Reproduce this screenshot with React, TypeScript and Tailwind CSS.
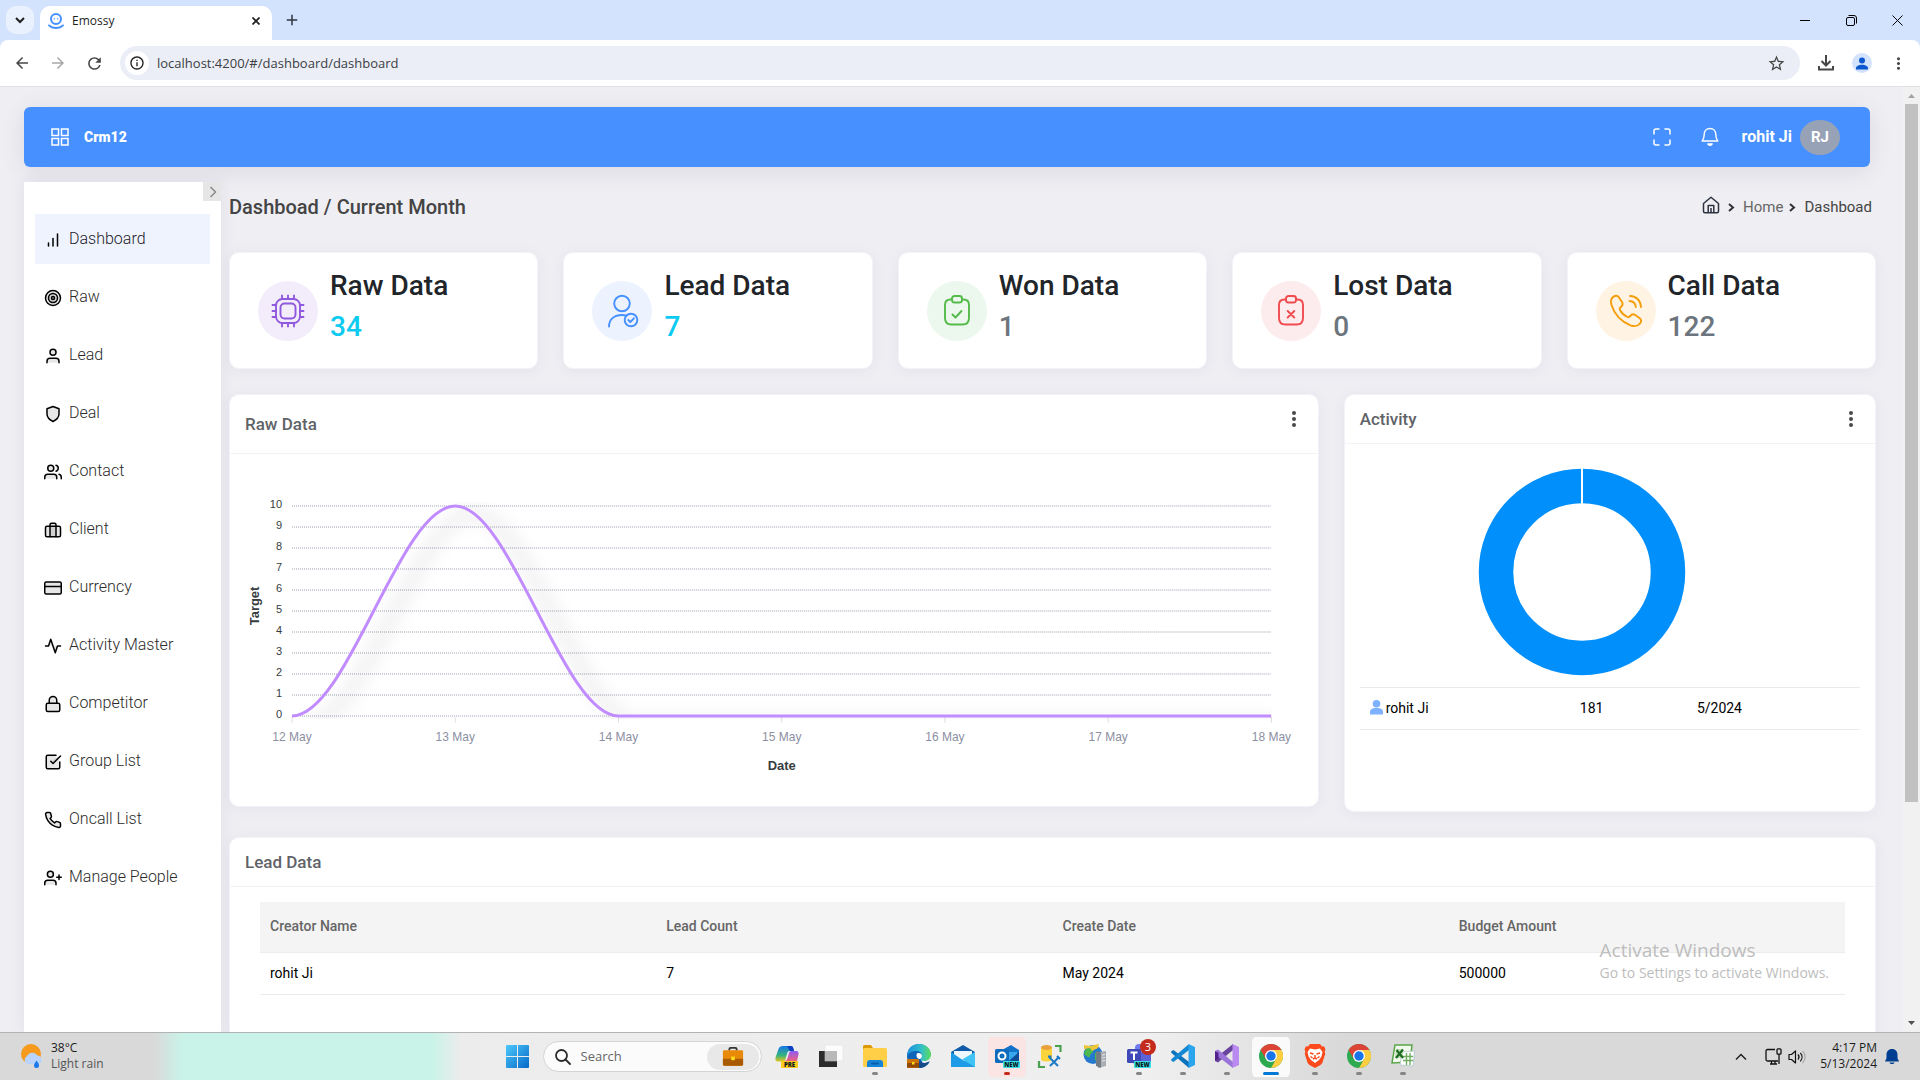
import type { ReactNode } from "react";
import {
  FiActivity, FiBarChart, FiBriefcase, FiCheckSquare, FiCreditCard, FiLock,
  FiPhone, FiShield, FiTarget, FiUser, FiUserPlus, FiUsers,
} from "react-icons/fi";
import {
  MdArrowBack, MdArrowForward, MdMoreVert,
  MdOutlineInfo, MdRefresh, MdStarOutline, MdAdd,
} from "react-icons/md";

const UI = "font-['Open_Sans',sans-serif]";

/* ---------- Browser chrome ---------- */

function TabStrip() {
  return (
    <div className={`flex h-10 shrink-0 items-end bg-[#d3e2fd] ${UI}`}>
      <button aria-label="Search tabs" className="mb-1.5 ml-1.5 flex size-7 items-center justify-center rounded-[10px] bg-[#e9f1fe]">
        <svg width="10" height="7" viewBox="0 0 10 7" fill="none" stroke="#1f1f1f" strokeWidth="2"><path d="M1 1l4 4 4-4" /></svg>
      </button>
      <div className="ml-1.5 flex h-[34px] w-[232px] items-center rounded-t-[10px] bg-white px-2 pb-1">
        <svg width="16" height="16" viewBox="0 0 16 16" fill="none" stroke="#4690ff">
          <circle cx="8" cy="6" r="5" strokeWidth="2" />
          <circle cx="6.300" cy="5.800" r=".7" fill="#4690ff" stroke="none" />
          <circle cx="9.700" cy="5.800" r=".7" fill="#4690ff" stroke="none" />
          <path d="M1 12.300c3.500 3.600 10.500 3.600 14 0" strokeWidth="1.800" strokeLinecap="round" />
        </svg>
        <span className="ml-2 flex-1 text-xs text-[#1f1f1f]">Emossy</span>
        <button aria-label="Close tab" className="flex size-4 items-center justify-center">
          <svg width="8" height="8" viewBox="0 0 8 8" stroke="#1f1f1f" strokeWidth="1.700"><path d="M.5.5l7 7M7.500.5l-7 7" /></svg>
        </button>
      </div>
      <button aria-label="New tab" className="mb-[11px] ml-[11px] text-[#303540]">
        <MdAdd size={18} />
      </button>
      <div className="ml-auto flex h-10 items-center">
        <button aria-label="Minimize" className="flex w-[46px] justify-center">
          <svg width="10" height="10" viewBox="0 0 10 10" stroke="#000"><path d="M0 5.500h10" /></svg>
        </button>
        <button aria-label="Restore" className="flex w-[46px] justify-center">
          <svg width="11" height="11" viewBox="0 0 11 11" fill="none" stroke="#000">
            <rect x=".5" y="2.500" width="8" height="8" rx="1.500" />
            <path d="M2.500.5h5.500a2.500 2.500 0 0 1 2.500 2.500v5.500" />
          </svg>
        </button>
        <button aria-label="Close" className="flex w-[46px] justify-center">
          <svg width="11" height="11" viewBox="0 0 11 11" stroke="#000"><path d="M.5.5l10 10M10.500.5l-10 10" /></svg>
        </button>
      </div>
    </div>
  );
}

function Toolbar() {
  return (
    <div className="bg-[#d3e2fd]">
      <div className={`flex h-[47px] shrink-0 items-center rounded-t-[8px] border-b border-[#dfe1e5] bg-white text-[#474747] ${UI}`}>
        <button aria-label="Back" className="ml-1 flex size-9 items-center justify-center"><MdArrowBack size={18} /></button>
        <button aria-label="Forward" className="flex size-9 items-center justify-center text-[#a8a8a8]"><MdArrowForward size={18} /></button>
        <button aria-label="Reload" className="flex size-9 items-center justify-center"><MdRefresh size={19} /></button>
        <div className="ml-2 flex h-[34px] flex-1 items-center rounded-full bg-[#ebeef7] pl-[5px] pr-3.5">
          <button aria-label="Site information" className="flex size-6 items-center justify-center rounded-full bg-white text-[#1f1f1f]"><MdOutlineInfo size={16} /></button>
          <input aria-label="Address" className="ml-2 flex-1 bg-transparent pt-0.5 text-[13px] text-[#3c4043] outline-none" defaultValue="localhost:4200/#/dashboard/dashboard" />
          <button aria-label="Bookmark this tab"><MdStarOutline size={19} /></button>
        </div>
        <button aria-label="Downloads" className="ml-[17px]">
          <svg width="18" height="18" viewBox="0 0 18 18" fill="none" stroke="#474747" strokeWidth="2">
            <path d="M9 1v10M4.500 7L9 11.500 13.500 7M2 12v3.500h14V12" />
          </svg>
        </button>
        <button aria-label="Profile" className="ml-[17px] flex size-5 items-center justify-center rounded-full bg-[#d3e2fd]">
          <svg width="12" height="13" viewBox="0 0 12 13" fill="#0b57d0"><circle cx="6" cy="3.500" r="3" /><path d="M0 12.500v-1.500c0-2 3-3.300 6-3.300s6 1.300 6 3.300v1.500z" /></svg>
        </button>
        <button aria-label="Menu" className="ml-[17px] mr-3"><MdMoreVert size={19} /></button>
      </div>
    </div>
  );
}

/* ---------- Application ---------- */

function AppHeader() {
  return (
    <header className="mr-[33px] flex h-[60px] items-center rounded-md bg-[#4690ff] pl-[27px] pr-[30px] text-white shadow-[0_4px_24px_rgba(20,20,40,0.09)]">
      <button aria-label="Toggle menu">
        <svg width="18" height="18" viewBox="0 0 18 18" fill="none" stroke="currentColor" strokeWidth="1.500">
          <rect x="1" y="1" width="6.500" height="6.500" /><rect x="10.500" y="1" width="6.500" height="6.500" />
          <rect x="1" y="10.500" width="6.500" height="6.500" /><rect x="10.500" y="10.500" width="6.500" height="6.500" />
        </svg>
      </button>
      <span className="ml-[15px] text-sm font-black">Crm12</span>
      <button aria-label="Full screen" className="ml-auto">
        <svg width="18" height="18" viewBox="0 0 18 18" fill="none" stroke="currentColor" strokeWidth="1.500" strokeLinecap="round">
          <path d="M1 6V3a2 2 0 0 1 2-2h3M12 1h3a2 2 0 0 1 2 2v3M17 12v3a2 2 0 0 1-2 2h-3M6 17H3a2 2 0 0 1-2-2v-3" />
        </svg>
      </button>
      <button aria-label="Notifications" className="ml-[29px]">
        <svg width="20" height="20" viewBox="0 0 20 20" fill="none" stroke="currentColor" strokeWidth="1.400" strokeLinejoin="round">
          <path d="M10 1.500c3.600 0 5.800 2.600 5.800 6 0 3.500.5 4.800 2 6.500H2.200c1.500-1.700 2-3 2-6.500 0-3.400 2.200-6 5.800-6z" />
          <path d="M7.800 17c.8 1.600 3.600 1.600 4.400 0z" fill="currentColor" />
        </svg>
      </button>
      <span className="ml-[22px] text-base font-bold">rohit Ji</span>
      <span className="ml-2 flex h-[35px] w-10 items-center justify-center rounded-[50%] bg-[#98a2b7] text-[15px] font-bold">RJ</span>
    </header>
  );
}

const NAV = [
  { label: "Dashboard", Icon: FiBarChart },
  { label: "Raw", Icon: FiTarget },
  { label: "Lead", Icon: FiUser },
  { label: "Deal", Icon: FiShield },
  { label: "Contact", Icon: FiUsers },
  { label: "Client", Icon: FiBriefcase },
  { label: "Currency", Icon: FiCreditCard },
  { label: "Activity Master", Icon: FiActivity },
  { label: "Competitor", Icon: FiLock },
  { label: "Group List", Icon: FiCheckSquare },
  { label: "Oncall List", Icon: FiPhone },
  { label: "Manage People", Icon: FiUserPlus },
];

function Sidebar() {
  return (
    <aside className="w-[197px] shrink-0 bg-white shadow-[0_0_16px_rgba(40,40,90,0.07)]">
      <button aria-label="Collapse sidebar" className="ml-auto flex h-[19px] w-[18px] items-center justify-center bg-[#e6e6e6] pl-0.5">
        <svg width="8" height="12" viewBox="0 0 8 12" fill="none" stroke="#8a8a8a" strokeWidth="1.500"><path d="M1.500 1l5 5-5 5" /></svg>
      </button>
      <nav className="ml-[11px] mr-[11px] mt-[13px] flex flex-col gap-2">
        {NAV.map(({ label, Icon }, i) => (
          <a
            key={label}
            href="#"
            className={
              i === 0
                ? "flex h-[50px] items-center gap-[7px] bg-[#eff3fd] pl-[9px] text-base font-light text-[#1c2029]"
                : "flex h-[50px] items-center gap-[7px] pl-[9px] text-base font-light text-[#2b2b2b]"
            }
          >
            <Icon size={18} className="mt-0.5 fill-[#00000018] text-black" />
            {label}
          </a>
        ))}
      </nav>
    </aside>
  );
}

function PageTitle() {
  return (
    <div className="mb-5 flex h-[50px] items-center justify-between pr-1">
      <h1 className="text-xl font-medium text-[#444]">Dashboad / Current Month</h1>
      <nav aria-label="Breadcrumb" className="flex items-center text-[15px] text-[#444]">
        <a href="#" aria-label="Home page" className="mb-1">
          <svg width="18" height="18" viewBox="0 0 18 18" fill="none" stroke="#2c323f" strokeWidth="1.500" strokeLinejoin="round">
            <path d="M1.500 7.500L9 1.200l7.500 6.300v7.700a1.500 1.500 0 0 1-1.500 1.500H3a1.500 1.500 0 0 1-1.500-1.500z" />
            <path d="M6.200 16.500V9.500h5.600v7M9 12v4.500" />
          </svg>
        </a>
        <Chevron className="ml-2" />
        <a href="#" className="ml-2 text-[#666]">Home</a>
        <Chevron className="ml-1.5" />
        <span className="ml-2">Dashboad</span>
      </nav>
    </div>
  );
}

function Chevron({ className }: { className: string }) {
  return (
    <svg className={className} width="7" height="9" viewBox="0 0 7 9" fill="none" stroke="#333" strokeWidth="2"><path d="M1 1l4 3.500L1 8" /></svg>
  );
}

const CARD = "rounded-[10px] border border-[#f3f3fa] bg-white shadow-[0_2px_14px_rgba(60,60,110,0.06)]";

const clipboard = (
  <>
    <path d="M11 4.500H9.500C6 4.500 4 6.500 4 10v13c0 4.500 2 6.500 6.500 6.500h11c4.500 0 6.500-2 6.500-6.500V10c0-3.500-2-5.500-5.500-5.500H21" />
    <rect x="11" y="1" width="10" height="6.500" rx="2.500" />
  </>
);

const STATS: { title: string; value: string; circle: string; num: string; icon: ReactNode }[] = [
  {
    title: "Raw Data", value: "34", circle: "bg-[#f3edfb] text-[#9059dd]", num: "text-[#0dcaf0]",
    icon: (
      <>
        <rect x="4" y="4" width="24" height="24" rx="6.500" />
        <rect x="8.500" y="8.500" width="15" height="15" rx="4" />
        <path d="M10 4V.5M16 4V.5M22 4V.5M10 31.500V28M16 31.500V28M22 31.500V28M4 10H.5M4 16H.5M4 22H.5M31.500 10H28M31.500 16H28M31.500 22H28" />
      </>
    ),
  },
  {
    title: "Lead Data", value: "7", circle: "bg-[#ecf3ff] text-[#4690ff]", num: "text-[#0dcaf0]",
    icon: (
      <>
        <circle cx="16" cy="8.500" r="7.800" />
        <path d="M3 31.500c0-7 5-11.500 13-11.500 1.500 0 3 .2 4.500.6" />
        <circle cx="25" cy="25" r="6.300" />
        <path d="M22.300 25l2 2 3.600-3.700" />
      </>
    ),
  },
  {
    title: "Won Data", value: "1", circle: "bg-[#ecf8ed] text-[#54ba4a]", num: "text-[#6c757d]",
    icon: <>{clipboard}<path d="M11.500 19.500l3 3 6-6.500" /></>,
  },
  {
    title: "Lost Data", value: "0", circle: "bg-[#fdeced] text-[#f04b4f]", num: "text-[#6c757d]",
    icon: <>{clipboard}<path d="M12.700 16l6.600 6.500M19.300 16l-6.600 6.500" /></>,
  },
  {
    title: "Call Data", value: "122", circle: "bg-[#fff4e3] text-[#f59e0b]", num: "text-[#6c757d]",
    icon: (
      <>
        <path d="M2.500 2.500C5 0 7.500.2 9 2.500l3 4.500c1 1.500.8 3-.5 4.300l-1.200 1.200c-.8.800-.8 1.600-.3 2.500 1.500 3 4 5.500 7.500 7 .9.400 1.500.2 2.200-.5l1.300-1.200c1.300-1.200 2.700-1.300 4.200-.3l4.300 3c2 1.500 2.100 3.500.5 5.500-2.200 2.800-5 3.500-9.500 1.800C10 26 4.500 19.500 1.500 10c-.9-3-.8-5.500 1-7.500z" />
        <path d="M20 1c6.500.3 10.700 4.700 11 11M19.500 6c4 .3 6 2.300 6.300 6" />
      </>
    ),
  },
];

function StatCards() {
  return (
    <div className="grid grid-cols-5 gap-[25px]">
      {STATS.map((s) => (
        <section key={s.title} className={`flex h-[117px] items-start pl-7 ${CARD}`}>
          <span className={`mt-7 flex size-[60px] shrink-0 items-center justify-center rounded-full ${s.circle}`}>
            <svg width="32" height="32" viewBox="0 0 32 32" fill="none" stroke="currentColor" strokeWidth="1.900" strokeLinecap="round" strokeLinejoin="round" className="overflow-visible">{s.icon}</svg>
          </span>
          <div className="ml-3 mt-3 text-[28px] font-medium leading-[41px]">
            <h2 className="text-[#212529]">{s.title}</h2>
            <p className={s.num}>{s.value}</p>
          </div>
        </section>
      ))}
    </div>
  );
}

function Dots() {
  return (
    <button aria-label="More options">
      <svg width="6" height="18" viewBox="0 0 6 18" fill="#4a4a4a"><circle cx="3" cy="3" r="2" /><circle cx="3" cy="9" r="2" /><circle cx="3" cy="15" r="2" /></svg>
    </button>
  );
}

const DAYS = ["12 May", "13 May", "14 May", "15 May", "16 May", "17 May", "18 May"];

function LineChart() {
  const x0 = 62, step = 163.3, top = 52, unit = 21;
  const base = top + unit * 10;
  const x = (i: number) => x0 + i * step;
  const c = step * 0.34;
  return (
    <svg className="block w-full" viewBox="0 0 1088 352" role="img" aria-label="Raw data per day" fontFamily="'Liberation Sans', Arial, sans-serif">
      <defs>
        <filter id="lineShadow" x="-20%" y="-20%" width="140%" height="140%">
          <feDropShadow dx="18" dy="7" stdDeviation="9" floodColor="#000" floodOpacity="0.27" />
        </filter>
        <clipPath id="plot"><rect x={x0} y={top - 4} width={step * 6} height={unit * 10 + 7} /></clipPath>
      </defs>
      {Array.from({ length: 11 }, (_, i) => (
        <g key={i}>
          <path d={`M${x0} ${top + i * unit}h${step * 6}`} stroke="#cdd0d8" strokeWidth="2" strokeDasharray="1 1" />
          <text x={x0 - 10} y={top + i * unit + 2} textAnchor="end" fontSize="11" fill="#373d3f">{10 - i}</text>
        </g>
      ))}
      {DAYS.map((d, i) => (
        <g key={d}>
          <path d={`M${x(i)} ${base + 1}v6`} stroke="#e0e0e0" />
          <text x={x(i)} y={base + 25} textAnchor="middle" fontSize="12" fill="#8d8fa3">{d}</text>
        </g>
      ))}
      <g clipPath="url(#plot)">
        <path
          d={`M${x(0)} ${base}C${x(0) + c} ${base} ${x(1) - c} ${top} ${x(1)} ${top}C${x(1) + c} ${top} ${x(2) - c} ${base} ${x(2)} ${base}H${x(6)}`}
          fill="none" stroke="#c18cff" strokeWidth="3" filter="url(#lineShadow)"
        />
      </g>
      <text x={x(3)} y={base + 54} textAnchor="middle" fontSize="13" fontWeight="900" fill="#373d3f">Date</text>
      <text transform="translate(29 152) rotate(-90)" textAnchor="middle" fontSize="13" fontWeight="900" fill="#373d3f">Target</text>
    </svg>
  );
}

function RawDataCard() {
  return (
    <section className={`col-span-8 ${CARD}`}>
      <div className="flex h-[59px] items-start justify-between border-b border-[#f3f3f6] pl-[15px] pr-[21px] pt-[15px]">
        <h2 className="pt-0.5 text-[17px] font-medium leading-6 text-[#5f6368]">Raw Data</h2>
        <Dots />
      </div>
      <LineChart />
    </section>
  );
}

function ActivityCard() {
  return (
    <section className={`col-span-4 ${CARD}`}>
      <div className="flex h-[49px] justify-between border-b border-[#f3f3f6] pl-[15px] pr-[21px]">
        <h2 className="self-center text-[17px] font-medium leading-6 text-[#5f6368]">Activity</h2>
        <Dots />
      </div>
      <div className="px-[15px] pb-[81px] pt-6">
        <div className="pr-14">
          <svg className="mx-auto block" width="208" height="208" viewBox="0 0 208 208" role="img" aria-label="Activity share">
            <circle cx="104" cy="104" r="86" fill="none" stroke="#008ffb" strokeWidth="34.500" />
            <path d="M104 0v38" stroke="#fff" strokeWidth="2" />
          </svg>
        </div>
        <table className="mt-[11px] w-full table-fixed border-y border-[#ebebeb] text-sm text-black">
          <tbody>
            <tr className="h-[42px]">
              <td className="w-[42%] pb-0.5 pl-2.5">
                <span className="flex items-center gap-[3px]">
                  <svg width="13" height="15" viewBox="0 0 13 15" fill="#7eb1ff"><circle cx="6.500" cy="3.800" r="3.800" /><path d="M0 14.500V12c0-2.500 2-4 6.500-4s6.500 1.500 6.500 4v2.500z" /></svg>
                  rohit Ji
                </span>
              </td>
              <td className="w-[23%] pb-0.5 pl-2.5">181</td>
              <td className="pb-0.5 pl-3">5/2024</td>
            </tr>
          </tbody>
        </table>
      </div>
    </section>
  );
}

function LeadDataCard() {
  return (
    <section className={`mt-[25px] pb-20 ${CARD}`}>
      <div className="flex h-[49px] items-center border-b border-[#f3f3f6] pl-[15px]">
        <h2 className="text-[17px] font-medium leading-6 text-[#5f6368]">Lead Data</h2>
      </div>
      <div className="px-[30px] pt-[15px]">
        <table className="w-full table-fixed text-left text-sm">
          <thead>
            <tr className="h-[50px] border-b border-[#ececec] bg-[#f4f4f4] text-[#666]">
              {["Creator Name", "Lead Count", "Create Date", "Budget Amount"].map((h) => (
                <th key={h} className="pb-0.5 pl-2.5 font-medium">{h}</th>
              ))}
            </tr>
          </thead>
          <tbody>
            <tr className="h-[42px] border-b border-[#ebebeb] text-black">
              {["rohit Ji", "7", "May 2024", "500000"].map((v) => (
                <td key={v} className="pl-2.5">{v}</td>
              ))}
            </tr>
          </tbody>
        </table>
      </div>
    </section>
  );
}

function ScrollBar() {
  return (
    <div className="flex w-[17px] shrink-0 flex-col items-center bg-[#f1f1f1]" aria-hidden="true">
      <svg width="17" height="17" viewBox="0 0 17 17" fill="#a3a3a3"><path d="M5 11h7L8.500 7z" /></svg>
      <div className="w-[13px] flex-[698] bg-[#c1c1c1]" />
      <div className="flex-[213]" />
      <svg width="17" height="17" viewBox="0 0 17 17" fill="#505050"><path d="M5 6h7l-3.500 4z" /></svg>
    </div>
  );
}

/* ---------- Windows taskbar ---------- */

function ChromeLogo() {
  return (
    <svg width="24" height="24" viewBox="0 0 24 24">
      <circle cx="12" cy="12" r="12" fill="#2da94f" />
      <path d="M12 12L1.600 6A12 12 0 0 1 22.400 6z" fill="#db4437" />
      <path d="M12 6h10.400A12 12 0 0 1 12 24l5.200-9z" fill="#ffcd40" />
      <path d="M1.600 6l5.200 9L12 6z" fill="#db4437" />
      <circle cx="12" cy="12" r="6" fill="#fff" />
      <circle cx="12" cy="12" r="4.700" fill="#1a73e8" />
    </svg>
  );
}

function Bag({ size }: { size: number }) {
  return (
    <svg width={size} height={size} viewBox="0 0 24 22">
      <path d="M8 4V2.500C8 1.500 8.500 1 9.500 1h5c1 0 1.500.5 1.500 1.500V4" fill="none" stroke="#333" strokeWidth="2" />
      <rect x="1" y="3.500" width="22" height="17" rx="1.500" fill="#e88a06" />
      <path d="M1 13h22v6a1.500 1.500 0 0 1-1.500 1.500h-19A1.500 1.500 0 0 1 1 19z" fill="#a85a04" />
      <rect x="10" y="10.500" width="4" height="4" fill="#ffd91a" />
    </svg>
  );
}

function Tag({ x, fill, text }: { x: number; fill: string; text: string }) {
  return (
    <g>
      <rect x={x} y="17" width="17" height="7" rx="1" fill={fill} />
      <text x={x + 8.5} y="22.800" textAnchor="middle" fontSize="6" fontWeight="800" fontFamily="'Open Sans', sans-serif" fill="#0a1a20">{text}</text>
    </g>
  );
}

const svgProps = { width: 24, height: 24, viewBox: "0 0 24 24", className: "overflow-visible" };

const APPS: { name: string; icon: ReactNode; mark?: string; box?: string }[] = [
  {
    name: "Copilot",
    icon: (
      <svg {...svgProps}>
        <defs>
          <linearGradient id="cpA" x1="0" y1="0" x2="0" y2="1"><stop stopColor="#1677e8" /><stop offset=".6" stopColor="#35b37e" /><stop offset="1" stopColor="#e4c51c" /></linearGradient>
          <linearGradient id="cpB" x1="0" y1="0" x2="0" y2="1"><stop stopColor="#8b5cf6" /><stop offset="1" stopColor="#f0627a" /></linearGradient>
        </defs>
        <path d="M8 2h8c1.500 0 2 1 2.500 3L19 7h-4c-2 0-2.500 1-3 3l-1.500 5c-.5 2-1.500 2.500-3 2.500H3C.5 17.500 0 15.500.7 13L3.500 5C4.200 3 5.500 2 8 2z" fill="url(#cpA)" />
        <path d="M12 2h4c1.500 0 2 1 2.500 3L19 7h-4z" fill="#0b3fc4" />
        <path d="M17 7h4c2.500 0 3 2 2.300 4.500L22 17H9c2 0 3-1 3.500-3l1.500-5c.5-1.500 1.500-2 3-2z" fill="url(#cpB)" />
        <Tag x={6} fill="#ffc81e" text="PRE" />
      </svg>
    ),
  },
  {
    name: "Task view",
    icon: (
      <svg {...svgProps}>
        <rect x="0" y="7" width="18" height="16" fill="#2c2c2c" />
        <rect x="6" y="1" width="18" height="16" fill="#fcfcfc" stroke="#dedede" strokeWidth=".5" />
        <rect x="6" y="7" width="12" height="10" fill="#b9b9b9" />
      </svg>
    ),
  },
  {
    name: "File Explorer", mark: "bg-[#858585] w-1.5",
    icon: (
      <svg {...svgProps}>
        <path d="M0 2.500A1.500 1.500 0 0 1 1.500 1H8l2 3v3H0z" fill="#dc9a0a" />
        <rect y="4" width="24" height="19" rx="1.500" fill="#ffcf48" />
        <path d="M4 23v-4a3 3 0 0 1 3-3h10a3 3 0 0 1 3 3v4z" fill="#1583d8" />
        <rect x="8" y="18.500" width="8" height="2" rx="1" fill="#0c5ba6" />
      </svg>
    ),
  },
  {
    name: "Edge",
    icon: (
      <svg {...svgProps}>
        <defs><linearGradient id="edgeA"><stop stopColor="#1b8ee0" /><stop offset=".6" stopColor="#33c0c8" /><stop offset="1" stopColor="#5fdc5a" /></linearGradient></defs>
        <circle cx="12" cy="12" r="12" fill="#0f63b8" />
        <path d="M14 15l10-3v5l-8 3z" fill="#efefef" />
        <path d="M.2 10.500C1 4 6 0 12 0c7 0 12 5 12 10.500 0 4-3 6.500-6.500 6.500-2.500 0-4-1-4-2 0-.8 1.500-1.500 1.500-3.500C15 9 12.500 7 9 7 4.500 7 1 9.500.2 13z" fill="url(#edgeA)" />
        <path d="M12 17c3.500 2.500 7 2.500 10.500.5C20.500 21.500 17 24 12 24z" fill="#134a8a" />
        <path d="M10 9.500c2-1 5 0 5 2.500 0 1.500-1.500 2-1.500 3-3 .5-5-3-3.500-5.500z" fill="#fff" />
        <rect x="0" y="15" width="12" height="9" rx="1" fill="#cf7207" /><path d="M0 19h12v4.500H0z" fill="#8f4a05" /><rect x="5" y="18" width="2.500" height="2.500" fill="#ffd91a" />
      </svg>
    ),
  },
  {
    name: "Mail",
    icon: (
      <svg {...svgProps}>
        <path d="M0 8L12 1l12 7v5H0z" fill="#0f5aa8" />
        <path d="M3 7h18v8H3z" fill="#eef6fd" />
        <path d="M0 8l13 9 11-9v15H0z" fill="#1d9be6" />
        <path d="M24 8v15L11 15.500z" fill="#41c3f5" />
      </svg>
    ),
  },
  {
    name: "Outlook", mark: "bg-[#c42b1c] w-1.5", box: "bg-[#fbe4e4]",
    icon: (
      <svg {...svgProps}>
        <path d="M7 6l9-5 8 5v13H7z" fill="#1373c9" />
        <path d="M8 8h14v9H8z" fill="#39a7ee" />
        <path d="M24 8v14H8z" fill="#0c4d96" />
        <rect x="0" y="5" width="14" height="14" rx="1.500" fill="#0f6cbd" />
        <circle cx="7" cy="12" r="3.500" fill="none" stroke="#fff" strokeWidth="2" />
        <Tag x={8} fill="#3be0e6" text="NEW" />
      </svg>
    ),
  },
  {
    name: "SQL Server Management Studio",
    icon: (
      <svg {...svgProps}>
        <path d="M2 3.500v12C2 18 13 18 13 15.500v-12z" fill="#fbd43b" />
        <ellipse cx="7.500" cy="3.500" rx="5.500" ry="2.500" fill="#e9a13b" />
        <path d="M16 2h5.500v6M0 17v6h6" fill="none" stroke="#4aa24f" strokeWidth="2.200" />
        <path d="M10 13l9 9M20 13l-9 9" stroke="#1c79c4" strokeWidth="2" />
        <path d="M9 12.500h3.500M18 12l3 3" stroke="#1c79c4" strokeWidth="2.200" />
      </svg>
    ),
  },
  {
    name: "IIS Manager",
    icon: (
      <svg {...svgProps}>
        <circle cx="10" cy="10.500" r="9.500" fill="#2479cf" />
        <path d="M2 6c4-4 7-3 8 0s-3 3-3 6-4 0-6-2zM12 9c3-1 5 1 5 4s-3 5-5 3z" fill="#4cb84d" />
        <path d="M1 1l6 1 9-2-1 4-6 3-2-3-6 1z" fill="#ecc53a" />
        <path d="M15 8l8-1v15l-8 2z" fill="#a9afb5" /><path d="M13 7l5 1.500V24l-5-2z" fill="#747b82" /><path d="M19 11l3-.5M19 14l3-.5M19 17l3-.5" stroke="#e8e8e8" />
      </svg>
    ),
  },
  {
    name: "Teams", mark: "bg-[#858585] w-1.5",
    icon: (
      <svg {...svgProps}>
        <circle cx="12" cy="4" r="4" fill="#6f7af0" />
        <path d="M6 8h18v9a6 6 0 0 1-6 6h-6a6 6 0 0 1-6-6z" fill="#5b63d8" />
        <rect x="0" y="5" width="14" height="14" rx="1.500" fill="#4048b8" />
        <path d="M3.500 8.500h7M7 8.500V16" stroke="#fff" strokeWidth="2" />
        <Tag x={7} fill="#3be0e6" text="NEW" />
        <circle cx="21" cy="3" r="8" fill="#c42b1c" />
        <text x="21" y="7" textAnchor="middle" fontSize="11" fontFamily="'Open Sans', sans-serif" fill="#fff">3</text>
      </svg>
    ),
  },
  {
    name: "Visual Studio Code", mark: "bg-[#858585] w-1.5",
    icon: (
      <svg {...svgProps}>
        <path d="M0 7.500L2.500 6 18 18v6L.5 9z" fill="#0b72bb" />
        <path d="M0 16.500L2.500 18 18 6V0L.5 15z" fill="#1488d2" />
        <path d="M17.500 0L24 3v18l-6.500 3z" fill="#2aa5ee" />
      </svg>
    ),
  },
  {
    name: "Visual Studio", mark: "bg-[#858585] w-1.5",
    icon: (
      <svg {...svgProps}>
        <path d="M0 17l3 1.500L18 6V0L3 12z" fill="#68449e" />
        <path d="M0 7l3-1.500L18 18v6L3 12.500z" fill="#9a74d8" />
        <path d="M0 7l3.500 2v6L0 17z" fill="#52218a" />
        <path d="M17.500 0L24 3v18l-6.500 3z" fill="#b98af0" />
      </svg>
    ),
  },
  { name: "Chrome", mark: "bg-[#0078d4] w-4", box: "bg-[#fafafa]", icon: <ChromeLogo /> },
  {
    name: "Brave", mark: "bg-[#858585] w-1.5",
    icon: (
      <svg {...svgProps}>
        <path d="M7 0h10l2 2.500 2-.2 1.500 3-.8 2.200.5 2.500-2.700 8.500c-.3 1-1 1.800-2 2.500L12 24l-5.500-3c-1-.7-1.700-1.500-2-2.500L1.800 10l.5-2.500-.8-2.200L3 2.300l2 .2z" fill="#fb4a1c" />
        <path d="M7 4.500l5 1 5-1 2.500 3.500-1 4.500-2.500 3.500L12 19l-4-3-2.500-3.500-1-4.500z" fill="#fff" />
        <path d="M7 9l3.500 1M17 9l-3.500 1M12 11v3l-2 1M12 14l2 1M7.500 12.500l2 1.500M16.500 12.500l-2 1.500" stroke="#fb4a1c" strokeWidth="1.400" fill="none" />
      </svg>
    ),
  },
  { name: "Chrome profile", mark: "bg-[#858585] w-1.5", icon: <ChromeLogo /> },
  {
    name: "Excel", mark: "bg-[#858585] w-1.5",
    icon: (
      <svg {...svgProps}>
        <path d="M4 1h17l-2 17-18 1z" fill="#f2f9ee" stroke="#5aa548" strokeWidth="1.500" />
        <path d="M11 8l12.500-1-1.500 15-13-1z" fill="#fff" stroke="#9bb" strokeWidth=".6" />
        <path d="M12 12.500h10M12 16.500h10M15.500 9v12M19 9v12" stroke="#6fae60" strokeWidth="1.400" />
        <path d="M5 5h7v9H4z" fill="#bfe0b0" />
        <path d="M5.500 6l6.500 8M12 5.500L5 14" stroke="#1f6b25" strokeWidth="2.200" />
      </svg>
    ),
  },
];

function Taskbar() {
  return (
    <footer className={`grid h-12 shrink-0 grid-cols-[1fr_auto_1fr] items-center border-t border-[#b3b3b3] bg-linear-[90deg,#d9d9d9_8%,#c9f3e8_9.5%,#c9f3e8_22.500%,#ececec_24%,#efefef_60%,#d9d9d9_70%] text-xs ${UI}`}>
      <div className="flex items-center gap-2 pb-0.5 pl-[21px] leading-4">
        <svg width="22" height="24" viewBox="0 0 22 24">
          <circle cx="10" cy="10" r="10" fill="#f59a1d" />
          <path d="M6 20a4.500 4.500 0 0 1 0-8 6 6 0 0 1 10.500-.5A4.500 4.500 0 0 1 18 20z" fill="#b9d3fa" />
          <path d="M15.500 16.500c2 3 2.500 3.500 2.500 5a2.500 2.500 0 0 1-5 0c0-1.500 1-2.500 2.500-5z" fill="#1a78ee" />
        </svg>
        <div>
          <p className="text-[#1c1c1c]">38°C</p>
          <p className="text-[#555]">Light rain</p>
        </div>
      </div>
      <div className="flex items-center">
        <button aria-label="Start" className="mr-[3px] flex w-11 justify-center">
          <svg width="23" height="23" viewBox="0 0 23 23">
            <defs><linearGradient id="win" x1="0" y1="0" x2="1" y2="1"><stop stopColor="#4cc9fb" /><stop offset="1" stopColor="#0668c8" /></linearGradient></defs>
            <path d="M0 1a1 1 0 0 1 1-1h10v11H0zM12 0h10a1 1 0 0 1 1 1v10H12zM0 12h11v11H1a1 1 0 0 1-1-1zM12 12h11v10a1 1 0 0 1-1 1H12z" fill="url(#win)" />
          </svg>
        </button>
        <label className="mr-[3px] flex h-[31px] w-[219px] items-center rounded-full border border-[#d4d4d4] bg-[#fbfbfb] pl-[11px] pr-0.5">
          <svg width="16" height="16" viewBox="0 0 16 16" fill="none" stroke="#2b2b2b" strokeWidth="1.800" strokeLinecap="round"><circle cx="6.500" cy="6.500" r="5.500" /><path d="M10.500 10.500L15 15" /></svg>
          <input placeholder="Search" aria-label="Search" className="ml-2.5 min-w-0 flex-1 bg-transparent text-[13px] outline-none placeholder:text-[#666]" />
          <span className="flex h-[26px] w-[52px] items-center justify-center rounded-full bg-[#e8e8e8]"><Bag size={22} /></span>
        </label>
        {APPS.map((a) => (
          <button key={a.name} aria-label={a.name} className={`flex h-10 w-11 flex-col items-center rounded-md border-x-[3px] border-transparent bg-clip-padding ${a.box ?? ""}`}>
            <span className="mt-[7px] flex h-6 items-center">{a.icon}</span>
            {a.mark && <span className={`mt-1 h-[3px] rounded-full ${a.mark}`} />}
          </button>
        ))}
      </div>
      <div className="flex items-center justify-end pr-[21px]">
        <svg width="12" height="8" viewBox="0 0 12 8" fill="none" stroke="#222" strokeWidth="1.500"><path d="M1 6.500l5-5 5 5" /></svg>
        <svg className="ml-[18px]" width="17" height="17" viewBox="0 0 17 17" fill="none" stroke="#111" strokeWidth="1.300">
          <path d="M10 1.500H2.500a1.500 1.500 0 0 0-1.500 1.500v8.500a1.500 1.500 0 0 0 1.500 1.500h10.500M5 16h7M6.500 13v3M10 13v3" />
          <rect x="12" y=".8" width="4" height="5.400" rx="1" /><path d="M14 6v10" />
        </svg>
        <svg className="ml-1.5" width="18" height="16" viewBox="0 0 18 16" fill="none" stroke="#111" strokeWidth="1.200" strokeLinejoin="round">
          <path d="M1 5.500h2.500L7.500 2v12l-4-3.500H1zM10 5.500c1.300 1.500 1.300 3.500 0 5M12.300 3.800c2.300 2.500 2.300 6 0 8.500" /><path d="M14.500 2c3.500 3.500 3.500 8.500 0 12" stroke="#aaa" />
        </svg>
        <div className="ml-3.5 pb-0.5 text-right leading-4 text-[#1c1c1c]">
          <p>4:17 PM</p>
          <p>5/13/2024</p>
        </div>
        <svg className="ml-2" width="14" height="16" viewBox="0 0 14 16" fill="#003e92"><path d="M7 0c3.500 0 5.500 2.500 5.500 5.500V9l1.500 3.500H0L1.500 9V5.500C1.500 2.500 3.500 0 7 0zM4.500 13.500h5C9 15.500 5 15.500 4.500 13.500z" /></svg>
      </div>
    </footer>
  );
}

export default function App() {
  return (
    <div className="flex h-screen flex-col overflow-hidden font-['Roboto',sans-serif]">
      <TabStrip />
      <Toolbar />
      <div className="relative flex min-h-0 flex-1 bg-[#efeef3]">
        <div className="flex min-w-0 flex-1 flex-col overflow-hidden pl-6 pt-5">
          <AppHeader />
          <div className="mt-[15px] flex min-h-0 flex-1">
            <Sidebar />
            <main className="ml-2 mr-[27px] min-w-0 flex-1">
              <PageTitle />
              <StatCards />
              <div className="mt-[25px] grid grid-cols-12 items-start gap-x-[25px]">
                <RawDataCard />
                <ActivityCard />
              </div>
              <LeadDataCard />
            </main>
          </div>
        </div>
        <ScrollBar />
        <div className={`pointer-events-none absolute bottom-12 right-[91px] text-[#bdbdbd] ${UI}`}>
          <p className="text-[19px] leading-6">Activate Windows</p>
          <p className="text-sm leading-[22px]">Go to Settings to activate Windows.</p>
        </div>
      </div>
      <Taskbar />
    </div>
  );
}
